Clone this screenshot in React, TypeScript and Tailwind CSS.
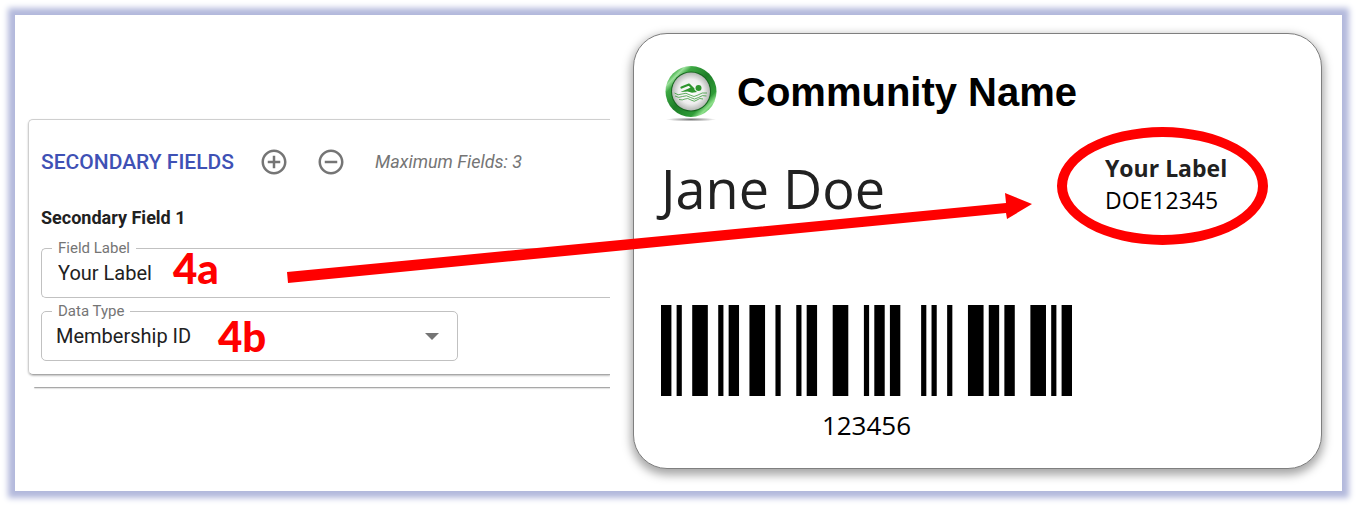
import { CSSProperties } from "react";

// [start, width] of every bar, in barcode modules
const BARS = [
  [0, 2], [3, 1], [6, 3], [11, 1], [13, 2], [17, 3], [22, 1], [26, 1],
  [28, 2], [33, 3], [39, 1], [41, 2], [44, 2], [50, 1], [52, 1], [55, 1],
  [59, 3], [63, 2], [66, 2], [71, 3], [75, 1], [77, 2],
];

const segoe: CSSProperties["fontFamily"] =
  '"Segoe UI", "Open Sans", "Noto Sans", sans-serif';

function CircleIcon({ plus }: { plus?: boolean }) {
  return (
    <svg viewBox="0 0 24 24" className="size-[30px] fill-[#757575]" aria-hidden="true">
      {plus && <path d="M11 7h2v10h-2z" />}
      <path d="M7 11h10v2H7z" />
      <path d="M12 2C6.48 2 2 6.48 2 12s4.48 10 10 10 10-4.48 10-10S17.52 2 12 2zm0 18c-4.41 0-8-3.59-8-8s3.59-8 8-8 8 3.59 8 8-3.59 8-8 8z" />
    </svg>
  );
}

function SwimLogo() {
  return (
    <svg viewBox="0 0 54 58" className="h-[58px] w-[54px] shrink-0" aria-hidden="true">
      <defs>
        <linearGradient id="ring" x1="0" y1="0" x2="1" y2="1">
          <stop offset="0" stopColor="#1e7a26" />
          <stop offset="0.14" stopColor="#3fae45" />
          <stop offset="0.2" stopColor="#9be09b" />
          <stop offset="0.27" stopColor="#3da843" />
          <stop offset="0.5" stopColor="#1d7d27" />
          <stop offset="0.74" stopColor="#2f9c37" />
          <stop offset="0.82" stopColor="#8fe08c" />
          <stop offset="0.9" stopColor="#3fb045" />
          <stop offset="1" stopColor="#1e7a26" />
        </linearGradient>
        <radialGradient id="face" cx="0.5" cy="0.5" r="0.5">
          <stop offset="0" stopColor="#ffffff" />
          <stop offset="0.65" stopColor="#eeeeee" />
          <stop offset="1" stopColor="#b4b8b4" />
        </radialGradient>
        <radialGradient id="ground">
          <stop offset="0" stopColor="#777" />
          <stop offset="1" stopColor="#777" stopOpacity="0" />
        </radialGradient>
      </defs>
      <ellipse cx="26" cy="54.5" rx="25" ry="2" fill="url(#ground)" />
      <circle cx="26" cy="26.5" r="25.5" fill="url(#ring)" />
      <circle cx="26" cy="26.5" r="20" fill="#17661f" />
      <circle cx="26" cy="26.5" r="19" fill="url(#face)" />
      <circle cx="33.5" cy="23" r="3" fill="#2f962f" />
      <path
        d="M16.5 22.500l7.500-3 4.500 4.500"
        fill="none"
        stroke="#2f962f"
        strokeWidth="2.2"
        strokeLinecap="round"
        strokeLinejoin="round"
      />
      <path d="M15.500 27l8-3.500 3-1.500 5.500 5-5 .8-4.500-1.300z" fill="#2f962f" />
      <g fill="none" stroke="#3a9a3a" strokeWidth="0.8">
        <path d="M9.500 28q3.500 3 7.500 1t8 1 8 0 9-2" />
        <path d="M10 31q3.500 2.500 7.500.5t8 1 8 0 8-1.500" />
        <path d="M14 34.500q3.500 1 6-.5t6 1 6 0 6-1" />
      </g>
    </svg>
  );
}

function FieldsPanel() {
  return (
    <section className="min-w-0 overflow-hidden pt-[100px] pb-4 pl-1 font-[Roboto,sans-serif]">
      <div className="mt-1 rounded-l-[5px] border border-r-0 border-[#cfcfcf] border-b-[#a8a8a8] pt-[27px] pb-[13px] pl-3 shadow-[0_1px_2px_rgba(0,0,0,0.25)]">
        <div className="flex items-center">
          <h2 className="text-[21px] leading-[30px] font-medium text-[#3f51b5]">SECONDARY FIELDS</h2>
          <button type="button" aria-label="Add field" className="ml-[25px]">
            <CircleIcon plus />
          </button>
          <button type="button" aria-label="Remove field" className="ml-[27px]">
            <CircleIcon />
          </button>
          <span className="ml-[29px] text-lg leading-[30px] text-[#757575] italic">
            Maximum Fields: 3
          </span>
        </div>

        <h3 className="mt-[29px] text-lg leading-6 font-bold text-[#212121]">Secondary Field 1</h3>

        <div className="relative mt-[18px] h-[50px] rounded-l-[5px] border border-r-0 border-[#c1c1c1]">
          <label
            htmlFor="field-label"
            className="absolute -top-[11px] left-2.5 bg-white px-1.5 text-[15px] leading-5 text-[#757575]"
          >
            Field Label
          </label>
          <input
            id="field-label"
            type="text"
            defaultValue="Your Label"
            className="h-full w-full bg-transparent px-4 text-xl text-[#212121] outline-none"
          />
        </div>

        <div className="relative mt-[13px] h-[50px] w-[417px] rounded-[5px] border border-[#c1c1c1]">
          <label
            htmlFor="data-type"
            className="absolute -top-[11px] left-2.5 bg-white px-1.5 text-[15px] leading-5 text-[#757575]"
          >
            Data Type
          </label>
          <select
            id="data-type"
            className="h-full w-full appearance-none bg-transparent px-3.5 text-xl text-[#212121] outline-none"
          >
            <option>Membership ID</option>
          </select>
          <svg
            viewBox="0 0 14 7"
            className="pointer-events-none absolute top-[21px] right-[18px] h-[7px] w-[14px] fill-[#757575]"
            aria-hidden="true"
          >
            <path d="M0 0h14L7 7z" />
          </svg>
        </div>
      </div>

      {/* bottom edge of the next card */}
      <div className="mt-[11px] ml-1.5 h-0.5 rounded-l-full border-b border-[#a8a8a8] shadow-[0_1px_1px_rgba(0,0,0,0.12)]" />
    </section>
  );
}

function MemberCard() {
  return (
    <section
      className="mt-[18px] mb-[22px] min-w-0 rounded-[34px] border border-[#7f7f7f] bg-white pt-[31px] pb-[26px] pl-[27px] shadow-[0_4px_10px_2px_rgba(0,0,0,0.35)]"
      style={{ fontFamily: segoe }}
    >
      <div className="flex items-start gap-[18px] pl-1">
        <SwimLogo />
        <h1 className="font-['Liberation_Sans',Arial,sans-serif] text-[40px] leading-[54px] font-bold text-black">
          Community Name
        </h1>
      </div>

      <div className="mt-[29px] flex items-start justify-between pr-[95px]">
        <p className="text-[54px] leading-[72px] text-[#212121]">Jane Doe</p>
        <div className="relative w-[121px] whitespace-nowrap">
          <p className="text-[23px] leading-8 font-bold text-[#212121]">Your Label</p>
          <p className="text-[23px] leading-8 text-black">DOE12345</p>
          <span className="absolute -top-[25px] -left-12 h-[118px] w-[211px] rounded-[50%] border-10 border-[#ff0000]" />
        </div>
      </div>

      <div className="mt-[81px] w-[411px]">
        <svg
          viewBox="0 0 79 10"
          preserveAspectRatio="none"
          className="h-[91px] w-full"
          role="img"
          aria-label="Barcode"
        >
          {BARS.map(([x, w]) => (
            <rect key={x} x={x} y="0" width={w} height="10" />
          ))}
        </svg>
        <p className="mt-3 text-center text-[26px] leading-[34px] text-black">123456</p>
      </div>
    </section>
  );
}

export default function App() {
  return (
    <div className="p-[15px]">
      <main className="relative grid grid-cols-[586fr_689fr] gap-[23px] bg-white pr-5 pl-[9px] shadow-[0_0_6px_7px_#b3b9dc]">
        <FieldsPanel />
        <MemberCard />

        {/* callouts */}
        <span className="absolute top-[228px] left-[158px] font-[Lato,sans-serif] text-[42px] leading-[50px] font-black text-[#ff0000]">
          4a
        </span>
        <span className="absolute top-[296px] left-[203px] font-[Lato,sans-serif] text-[42px] leading-[50px] font-black text-[#ff0000]">
          4b
        </span>
        <svg
          viewBox="0 0 746 92"
          className="pointer-events-none absolute top-[177px] left-[272px] h-[92px] w-[746px] fill-[#ff0000]"
          aria-hidden="true"
        >
          <path d="M0 80L719 11 718 1 745 12 720 27 719 21 1 91z" />
        </svg>
      </main>
    </div>
  );
}
